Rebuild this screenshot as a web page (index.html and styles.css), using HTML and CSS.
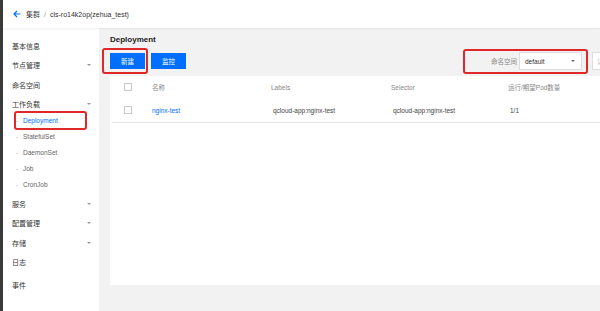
FILE: index.html
```html
<!DOCTYPE html>
<html lang="zh-CN">
  <head>
    <meta charset="UTF-8" />
    <title>Deployment</title>
    <link rel="stylesheet" href="styles.css">
  </head>
  <body>
    <div class="app">
      <header class="topbar">
        <svg class="back-icon" width="8" height="8" viewBox="0 0 8 8">
          <path d="M7.5 4H1 M4 1L1 4L4 7" fill="none" stroke="#006eff" stroke-width="1.2" />
        </svg>
        <span class="crumb">集群</span>
        <span class="crumb-sep">/</span>
        <span class="crumb-current">cls-ro14k2op(zehua_test)</span>
      </header>

      <div class="layout">
        <nav class="sidebar">
          <div class="nav-item">基本信息</div>
          <div class="nav-item">节点管理<span class="caret"></span></div>
          <div class="nav-item">命名空间</div>
          <div class="nav-item">工作负载<span class="caret"></span></div>
          <div class="sub-list">
            <div class="sub-item active"><span class="dash">-</span>Deployment</div>
            <div class="sub-item"><span class="dash">-</span>StatefulSet</div>
            <div class="sub-item"><span class="dash">-</span>DaemonSet</div>
            <div class="sub-item"><span class="dash">-</span>Job</div>
            <div class="sub-item"><span class="dash">-</span>CronJob</div>
          </div>
          <div class="nav-item">服务<span class="caret"></span></div>
          <div class="nav-item">配置管理<span class="caret"></span></div>
          <div class="nav-item">存储<span class="caret"></span></div>
          <div class="nav-item">日志</div>
          <div class="nav-item last">事件</div>
        </nav>

        <main class="main">
          <div class="content">
            <h1 class="page-title">Deployment</h1>

            <div class="toolbar">
              <div class="actions">
                <button class="btn marked">新建</button>
                <button class="btn">监控</button>
              </div>
              <div class="filters">
                <div class="ns-filter">
                  <span class="ns-label">命名空间</span>
                  <div class="select">default<span class="select-caret"></span></div>
                </div>
                <div class="search">请输入名称</div>
              </div>
            </div>

            <div class="card">
              <div class="table-head">
                <div class="cell-check"><span class="checkbox"></span></div>
                <div>名称</div>
                <div>Labels</div>
                <div>Selector</div>
                <div>运行/期望Pod数量</div>
              </div>
              <div class="table-row">
                <div class="cell-check"><span class="checkbox"></span></div>
                <div><a class="link">nginx-test</a></div>
                <div>qcloud-app:nginx-test</div>
                <div>qcloud-app:nginx-test</div>
                <div>1/1</div>
              </div>
            </div>
          </div>
        </main>
      </div>
    </div>
  </body>
</html>
```

FILE: styles.css
```css
:root {
  --blue: #006eff;
  --mark-red: #e0282b;
  --text-color: #333;
  --muted-color: #888;
  --page-bg: #f2f2f2;
  --border-color: #e3e3e3;
}
body {
  margin: 0;
  font-family: "Liberation Sans", "Noto Sans CJK SC", sans-serif;
  color: var(--text-color);
  width: 600px;
  height: 311px;
  overflow: hidden;
}
.app {
  display: flex;
  flex-direction: column;
  height: 311px;
  border-left: 3px solid #3a3a3a;
}
.topbar {
  height: 28px;
  flex: none;
  display: flex;
  align-items: center;
  padding-left: 10px;
  background: #fff;
  font-size: 7px;
  position: relative;
  z-index: 1;
  box-shadow: 0 1px 2px rgba(0, 0, 0, 0.06);
}
.back-icon {
  margin-right: 5px;
}
.crumb {
  color: #444;
}
.crumb-sep {
  color: #999;
  margin: 0 4px;
}
.layout {
  display: flex;
  flex: 1;
  min-height: 0;
}
.sidebar {
  width: 96px;
  flex: none;
  background: #fff;
  padding-top: 8px;
}
.nav-item {
  height: 19.5px;
  display: flex;
  align-items: center;
  justify-content: space-between;
  padding: 0 8px 0 9px;
  font-size: 7px;
  color: #333;
}
.nav-item.last {
  margin-top: 3px;
}
.caret {
  width: 0;
  height: 0;
  border-left: 2px solid transparent;
  border-right: 2px solid transparent;
  border-top: 2.5px solid #999;
}
.sub-list {
  margin: -2px 0 2px;
}
.sub-item {
  height: 16px;
  display: flex;
  align-items: center;
  padding-left: 13px;
  font-size: 6.5px;
  color: #666;
  position: relative;
}
.dash {
  color: #bbb;
  width: 3px;
  margin-right: 4px;
}
.sub-item.active {
  color: var(--blue);
}
.sub-item.active::after {
  content: "";
  position: absolute;
  left: 11px;
  width: 73px;
  top: -1.5px;
  bottom: -1.5px;
  border: 2px solid var(--mark-red);
  border-radius: 3px;
  box-sizing: border-box;
}
.main {
  flex: 1;
  background: var(--page-bg);
  overflow: hidden;
  padding: 6px 0 0 11px;
}
.content {
  width: 530px;
}
.page-title {
  margin: 0;
  font-size: 8px;
  line-height: 12px;
  font-weight: 700;
  color: #222;
}
.toolbar {
  height: 16px;
  margin-top: 7px;
  display: flex;
  align-items: center;
  justify-content: space-between;
}
.actions {
  display: flex;
  gap: 6px;
}
.btn {
  width: 35px;
  height: 16px;
  padding: 0;
  border: none;
  background: var(--blue);
  color: #fff;
  font-family: inherit;
  font-size: 6.5px;
  position: relative;
}
.btn.marked::after {
  content: "";
  position: absolute;
  left: -8px;
  right: -3px;
  top: -5px;
  bottom: -5px;
  border: 2px solid var(--mark-red);
  border-radius: 3px;
}
.filters {
  display: flex;
  align-items: center;
  gap: 4px;
}
.ns-filter {
  height: 25px;
  box-sizing: border-box;
  display: flex;
  align-items: center;
  gap: 2px;
  padding: 0 4px 0 26px;
  border: 2px solid var(--mark-red);
  border-radius: 3px;
}
.ns-label {
  font-size: 6.5px;
  color: var(--muted-color);
}
.select {
  width: 63px;
  height: 18px;
  box-sizing: border-box;
  border: 1px solid #ddd;
  background: #fff;
  display: flex;
  align-items: center;
  justify-content: space-between;
  padding: 0 6px 0 5px;
  font-size: 6.5px;
  color: #333;
}
.select-caret {
  width: 0;
  height: 0;
  border-left: 2px solid transparent;
  border-right: 2px solid transparent;
  border-top: 2.5px solid #666;
}
.search {
  width: 48px;
  height: 18px;
  box-sizing: border-box;
  border: 1px solid #ddd;
  background: #fff;
  display: flex;
  align-items: center;
  padding-left: 4px;
  font-size: 6.5px;
  color: #bbb;
  white-space: nowrap;
  overflow: hidden;
}
.card {
  margin-top: 7px;
  height: 209px;
  background: #fff;
}
.table-head,
.table-row {
  display: grid;
  grid-template-columns: 42px 119px 120px 117px 1fr;
  align-items: center;
  font-size: 6.5px;
}
.table-head {
  height: 22px;
  color: var(--muted-color);
}
.table-row {
  height: 24px;
  border-bottom: 1px solid var(--border-color);
  margin-left: 2px;
  padding-left: 0;
  color: #444;
}
.table-row .cell-check {
  padding-left: 12px;
}
.cell-check {
  padding-left: 14px;
  display: flex;
}
.table-row > div:nth-child(2) {
  margin-left: -2px;
}
.checkbox {
  width: 8px;
  height: 8px;
  box-sizing: border-box;
  border: 1px solid #c8c8c8;
  background: #fff;
}
.link {
  color: var(--blue);
  text-decoration: none;
}
```
